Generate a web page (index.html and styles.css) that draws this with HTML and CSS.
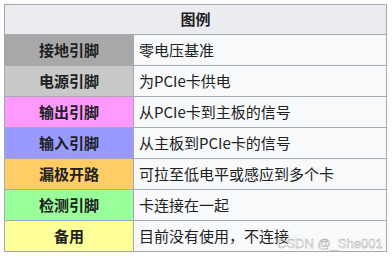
FILE: index.html
```html
<!doctype html>
<html>
<head>
<meta charset="utf-8">
<title>图例</title>
<link rel="stylesheet" href="styles.css">
</head>
<body>
  <div class="wrap">
    <table class="legend">
      <tr><th colspan="2" class="head">图例</th></tr>
      <tr><th class="gnd">接地引脚</th><td>零电压基准</td></tr>
      <tr><th class="pwr">电源引脚</th><td>为PCIe卡供电</td></tr>
      <tr><th class="out">输出引脚</th><td>从PCIe卡到主板的信号</td></tr>
      <tr><th class="in">输入引脚</th><td>从主板到PCIe卡的信号</td></tr>
      <tr><th class="od">漏极开路</th><td>可拉至低电平或感应到多个卡</td></tr>
      <tr><th class="sense">检测引脚</th><td>卡连接在一起</td></tr>
      <tr><th class="rsv">备用</th><td>目前没有使用，不连接</td></tr>
    </table>
    <div class="mark">CSDN @_She001</div>
  </div>
</body>
</html>
```

FILE: styles.css
```css
html, body { margin:0; padding:0; background:#fff; }

.wrap {
  position:relative;
  padding:4px 0 0 4px;
}

.legend {
  border-collapse:collapse;
  width:383px;
  font: 15px "Noto Sans CJK SC", "Liberation Sans", sans-serif;
  color:#202122;
  background:#f8f9fa;
  border:1px solid #a2a9b1;
}

.legend th, .legend td {
  border:1px solid #a2a9b1;
  padding:6px 5px;
  line-height:18px;
}

.legend th { width:118px; text-align:center; font-weight:bold; }
.legend td { text-align:left; }

.legend .head { background:#eaecf0; padding:5px 5px 6px; }

.gnd   { background:#a8a8a8; }
.pwr   { background:#c8c8c8; }
.out   { background:#ff99ff; }
.in    { background:#9999ff; }
.od    { background:#ffcc66; }
.sense { background:#99ff99; }
.rsv   { background:#ffff99; }

.mark {
  position:absolute;
  left:277px;
  top:236px;
  font: 13px "Liberation Sans", sans-serif;
  color:#fff;
  -webkit-text-stroke:0.4px #999;
  opacity:.9;
}
```
